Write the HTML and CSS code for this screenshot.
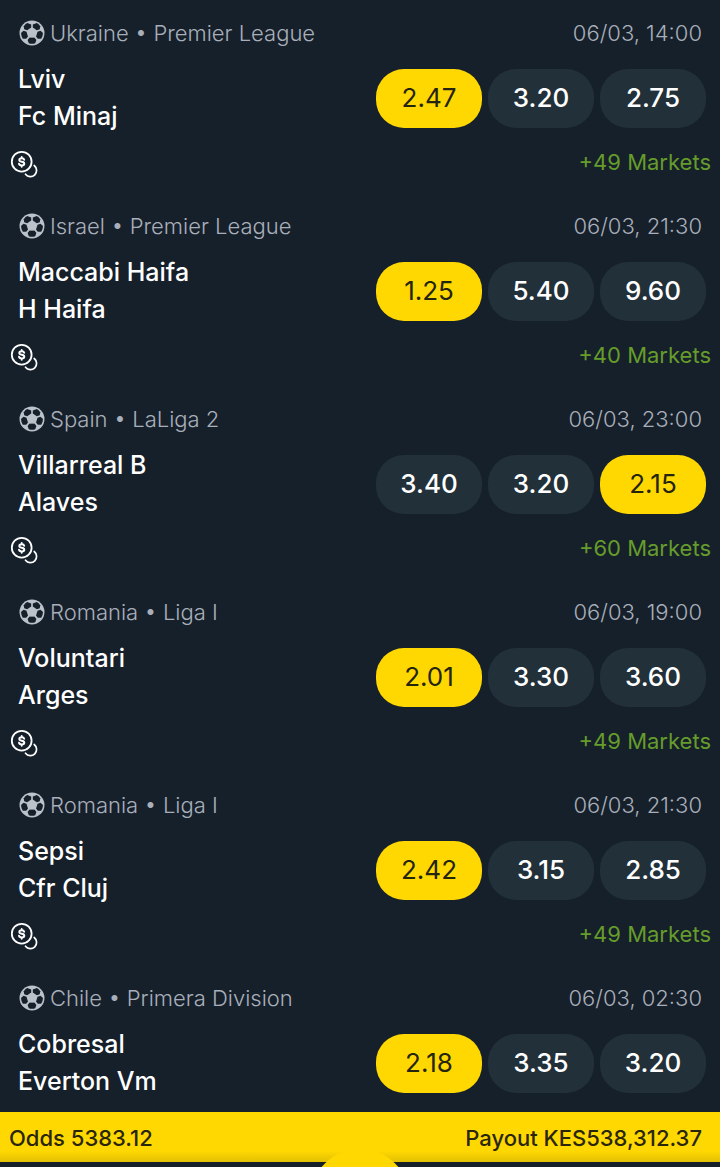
FILE: index.html
```html
<!DOCTYPE html>
<html lang="en">
<head>
<meta charset="utf-8">
<meta name="viewport" content="width=device-width, initial-scale=1">
<title>Matches</title>
<link rel="stylesheet" href="styles.css">
</head>
<body>
<svg class="sprite" aria-hidden="true">
  <symbol id="ball" viewBox="0 0 26 26">
    <circle cx="13" cy="13" r="12.5" fill="#bcc2ca"/>
    <g fill="#16202a">
      <path d="M8.2 3.1 L12.2 4.6 V7.4 L8.2 10.2 L5.2 9.2 L4.8 6.2 Q6.2 4.2 8.2 3.1Z"/>
      <path d="M17.8 3.1 L13.8 4.6 V7.4 L17.8 10.2 L20.8 9.2 L21.2 6.2 Q19.8 4.2 17.8 3.1Z"/>
      <path d="M2 12.9 L4.5 10.8 L7.5 11.8 L9 16.4 L7.2 18.8 L3.8 18.7 Q2.1 16.2 2 12.9Z"/>
      <path d="M24 12.9 L21.5 10.8 L18.5 11.8 L17 16.4 L18.8 18.8 L22.2 18.7 Q23.9 16.2 24 12.9Z"/>
      <path d="M10.5 17.5 H15.5 L17.4 20 L16.2 23.3 Q13 24.4 9.8 23.3 L8.6 20Z"/>
    </g>
    <path d="M13 8.2 L17.8 11.7 L16 17.3 H10 L8.2 11.7Z" fill="#bcc2ca"/>
  </symbol>
  <symbol id="coins" viewBox="0 0 28 28">
    <g fill="none" stroke="#fff" stroke-linecap="round">
      <circle cx="11.7" cy="11.7" r="9.9" stroke-width="1.8"/>
      <path d="M24.2 15.5 A6.2 6.2 0 1 1 15.5 24.2" stroke-width="1.7"/>
      <path d="M14.2 9.7 Q13.9 8.3 11.7 8.3 Q9.3 8.3 9.3 10 Q9.3 11.4 11.7 11.8 Q14.3 12.2 14.3 13.7 Q14.3 15.4 11.7 15.4 Q9.3 15.4 9 13.8 M11.7 7 V8.3 M11.7 15.4 V16.7" stroke-width="1.9"/>
    </g>
  </symbol>
</svg>

<div class="screen">
  <main class="matches">
    <article class="match">
      <header class="match-head"><svg class="ball"><use href="#ball"/></svg><span class="league">Ukraine • Premier League</span><time class="time">06/03, 14:00</time></header>
      <div class="match-main">
        <div class="teams"><div>Lviv</div><div>Fc Minaj</div></div>
        <div class="odds"><button class="odd picked">2.47</button><button class="odd">3.20</button><button class="odd">2.75</button></div>
      </div>
      <footer class="match-foot"><svg class="coins"><use href="#coins"/></svg><a class="markets" href="#">+49 Markets</a></footer>
    </article>
    <article class="match">
      <header class="match-head"><svg class="ball"><use href="#ball"/></svg><span class="league">Israel • Premier League</span><time class="time">06/03, 21:30</time></header>
      <div class="match-main">
        <div class="teams"><div>Maccabi Haifa</div><div>H Haifa</div></div>
        <div class="odds"><button class="odd picked">1.25</button><button class="odd">5.40</button><button class="odd">9.60</button></div>
      </div>
      <footer class="match-foot"><svg class="coins"><use href="#coins"/></svg><a class="markets" href="#">+40 Markets</a></footer>
    </article>
    <article class="match">
      <header class="match-head"><svg class="ball"><use href="#ball"/></svg><span class="league">Spain • LaLiga 2</span><time class="time">06/03, 23:00</time></header>
      <div class="match-main">
        <div class="teams"><div>Villarreal B</div><div>Alaves</div></div>
        <div class="odds"><button class="odd">3.40</button><button class="odd">3.20</button><button class="odd picked">2.15</button></div>
      </div>
      <footer class="match-foot"><svg class="coins"><use href="#coins"/></svg><a class="markets" href="#">+60 Markets</a></footer>
    </article>
    <article class="match">
      <header class="match-head"><svg class="ball"><use href="#ball"/></svg><span class="league">Romania • Liga I</span><time class="time">06/03, 19:00</time></header>
      <div class="match-main">
        <div class="teams"><div>Voluntari</div><div>Arges</div></div>
        <div class="odds"><button class="odd picked">2.01</button><button class="odd">3.30</button><button class="odd">3.60</button></div>
      </div>
      <footer class="match-foot"><svg class="coins"><use href="#coins"/></svg><a class="markets" href="#">+49 Markets</a></footer>
    </article>
    <article class="match">
      <header class="match-head"><svg class="ball"><use href="#ball"/></svg><span class="league">Romania • Liga I</span><time class="time">06/03, 21:30</time></header>
      <div class="match-main">
        <div class="teams"><div>Sepsi</div><div>Cfr Cluj</div></div>
        <div class="odds"><button class="odd picked">2.42</button><button class="odd">3.15</button><button class="odd">2.85</button></div>
      </div>
      <footer class="match-foot"><svg class="coins"><use href="#coins"/></svg><a class="markets" href="#">+49 Markets</a></footer>
    </article>
    <article class="match">
      <header class="match-head"><svg class="ball"><use href="#ball"/></svg><span class="league">Chile • Primera Division</span><time class="time">06/03, 02:30</time></header>
      <div class="match-main">
        <div class="teams"><div>Cobresal</div><div>Everton Vm</div></div>
        <div class="odds"><button class="odd picked">2.18</button><button class="odd">3.35</button><button class="odd">3.20</button></div>
      </div>
    </article>
  </main>
  <section class="betslip"><span>Odds 5383.12</span><span>Payout KES538,312.37</span></section>
  <nav class="navbar"><button class="slip-button" aria-label="Betslip"></button></nav>
</div>
</body>
</html>
```
FILE: styles.css
```css
* {
  box-sizing: border-box;
}

body {
  margin: 0;
  background: #16202a;
  color: #fff;
  font-family: Inter, "Liberation Sans", sans-serif;
}

.sprite {
  position: absolute;
  width: 0;
  height: 0;
}

.screen {
  display: flex;
  flex-direction: column;
  height: 100vh;
  overflow: hidden;
}

.matches {
  flex: 1;
  min-height: 0;
  overflow: hidden;
}

.match {
  padding: 17px 9px 15px 10px;
}

.match-head {
  display: flex;
  align-items: center;
  padding: 0 9px;
  color: #a9afba;
  font-size: 22px;
  font-weight: 300;
  line-height: 32px;
}

.ball {
  width: 26px;
  height: 26px;
  margin-right: 5px;
}

.time {
  margin-left: auto;
}

.match-main {
  display: flex;
  justify-content: space-between;
  align-items: center;
  margin-top: 12px;
  padding: 0 5px 0 8px;
}

.teams {
  font-size: 25px;
  font-weight: 500;
  line-height: 37px;
}

.odds {
  display: flex;
  gap: 6px;
}

.odd {
  width: 106px;
  height: 59px;
  padding: 0;
  border: 0;
  border-radius: 28px;
  background: #22303a;
  color: #fff;
  font: 500 26px/32px Inter, "Liberation Sans", sans-serif;
}

.odd.picked {
  background: #ffd802;
  color: #24240f;
  font-weight: 400;
}

.match-foot {
  display: flex;
  justify-content: space-between;
  align-items: flex-end;
  margin-top: 11px;
}

.coins {
  width: 28px;
  height: 28px;
}

.markets {
  color: #659c2b;
  font-size: 22px;
  line-height: 32px;
  text-decoration: none;
}

.betslip {
  display: flex;
  justify-content: space-between;
  padding: 10px 18px 8px 9px;
  background: linear-gradient(#ffd802 78%, #e3c004);
  color: #2a260c;
  font-size: 22px;
  font-weight: 500;
  line-height: 32px;
}

.navbar {
  display: flex;
  justify-content: center;
  height: 5px;
}

.slip-button {
  flex: none;
  width: 100px;
  height: 100px;
  margin-top: -13px;
  padding: 0;
  border: 0;
  border-radius: 50%;
  background: #ffd802;
}
```
